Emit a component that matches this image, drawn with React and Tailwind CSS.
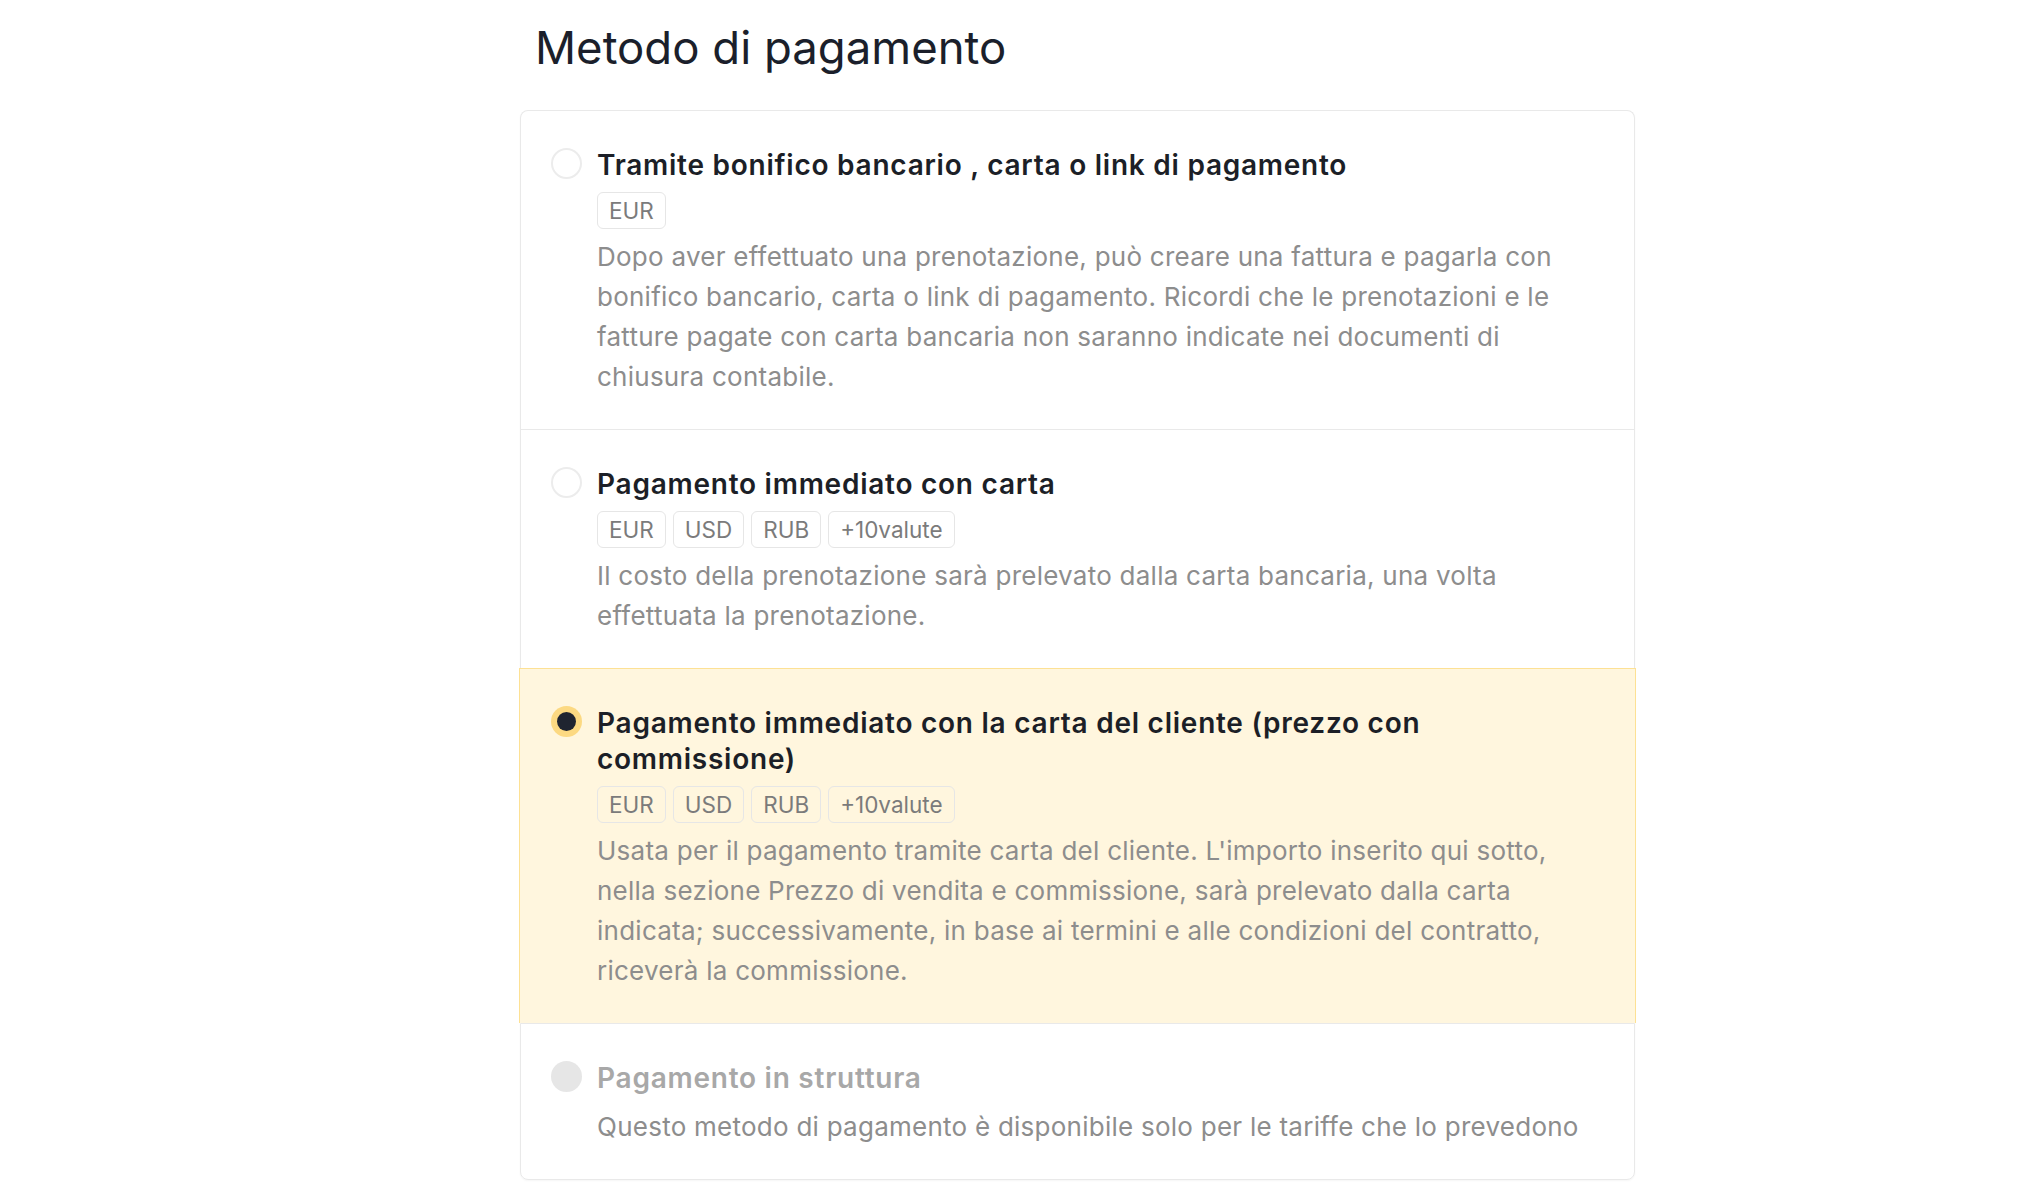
const methods = [
  {
    id: 'bank',
    title: 'Tramite bonifico bancario , carta o link di pagamento',
    currencies: ['EUR'],
    text: 'Dopo aver effettuato una prenotazione, può creare una fattura e pagarla con bonifico bancario, carta o link di pagamento. Ricordi che le prenotazioni e le fatture pagate con carta bancaria non saranno indicate nei documenti di chiusura contabile.',
  },
  {
    id: 'card',
    title: 'Pagamento immediato con carta',
    currencies: ['EUR', 'USD', 'RUB', '+10valute'],
    text: 'Il costo della prenotazione sarà prelevato dalla carta bancaria, una volta effettuata la prenotazione.',
  },
  {
    id: 'client-card',
    title: 'Pagamento immediato con la carta del cliente (prezzo con commissione)',
    currencies: ['EUR', 'USD', 'RUB', '+10valute'],
    text: "Usata per il pagamento tramite carta del cliente. L'importo inserito qui sotto, nella sezione Prezzo di vendita e commissione, sarà prelevato dalla carta indicata; successivamente, in base ai termini e alle condizioni del contratto, riceverà la commissione.",
    selected: true,
  },
  {
    id: 'hotel',
    title: 'Pagamento in struttura',
    currencies: [],
    text: 'Questo metodo di pagamento è disponibile solo per le tariffe che lo prevedono',
    disabled: true,
  },
];

function Radio({ selected, disabled }) {
  if (selected) {
    return (
      <span className="w-[31px] h-[31px] shrink-0 rounded-full bg-[#fcd982] flex items-center justify-center">
        <span className="w-[19px] h-[19px] rounded-full bg-[#1f2430]" />
      </span>
    );
  }
  if (disabled) {
    return <span className="w-[31px] h-[31px] shrink-0 rounded-full bg-[#e6e6e6]" />;
  }
  return <span className="w-[31px] h-[31px] shrink-0 rounded-full border-2 border-[#ececec] bg-white" />;
}

function MethodRow({ m, first, last }) {
  const rowClass = m.selected
    ? 'bg-[#fff6de] border-x border-t border-[#fde194] -mx-px px-[31px]'
    : 'bg-white border-x border-t border-[#e9e9e9] px-[30px]';
  return (
    <div
      className={
        rowClass +
        (first ? ' rounded-t-lg' : '') +
        (last ? ' rounded-b-lg border-b' : '') +
        ' flex gap-[15px] pt-[37px] pb-[32px]'
      }
    >
      <Radio selected={m.selected} disabled={m.disabled} />
      <div className="flex-1 min-w-0 pr-[8px]">
        <div
          className={
            'text-[28px] leading-[36px] font-semibold tracking-[0.75px] -mt-px ' +
            (m.disabled ? 'text-[#a8a8a8]' : 'text-[#1c1f27]')
          }
        >
          {m.title}
        </div>
        {m.currencies.length > 0 && (
          <div className="flex gap-[7px] mt-[9px]">
            {m.currencies.map((c) => (
              <span
                key={c}
                className="h-[37px] px-[11px] flex items-center rounded-md border border-[#e6e6e6] text-[22.5px] text-[#7b7b7b]"
              >
                {c}
              </span>
            ))}
          </div>
        )}
        <p
          className={
            'text-[26px] leading-[40px] tracking-[0.25px] text-[#8d8d8d] ' +
            (m.currencies.length > 0 ? 'mt-[8px]' : 'mt-[11px]')
          }
        >
          {m.text}
        </p>
      </div>
    </div>
  );
}

export default function App() {
  return (
    <div
      className="min-h-[1200px] bg-white pl-[520px] pt-[20px]"
      style={{ fontFamily: 'Inter, "Noto Sans", sans-serif' }}
    >
      <div className="w-[1115px]">
        <h1 className="pl-[15px] text-[45.5px] leading-[56px] text-[#1b1f2b] font-normal">Metodo di pagamento</h1>
        <div className="mt-[34px] rounded-lg shadow-[0_1px_2px_rgba(0,0,0,0.04)]">
          {methods.map((m, i) => (
            <MethodRow key={m.id} m={m} first={i === 0} last={i === methods.length - 1} />
          ))}
        </div>
      </div>
    </div>
  );
}
